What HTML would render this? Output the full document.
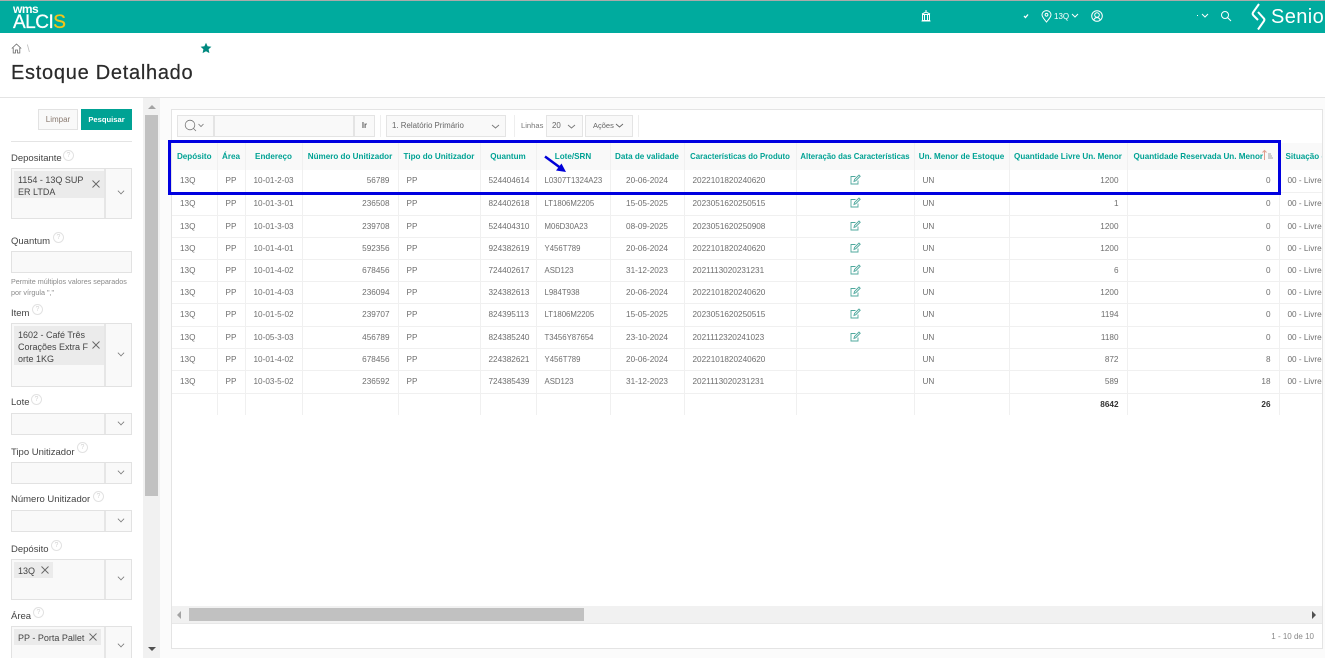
<!DOCTYPE html>
<html lang="pt-BR"><head><meta charset="utf-8"><title>Estoque Detalhado</title>
<style>
*{box-sizing:border-box}
html,body{margin:0;padding:0;width:1325px;height:658px;overflow:hidden;background:#fff;font-family:"Liberation Sans",sans-serif;color:#404040}
#w{position:relative;width:1325px;height:658px;overflow:hidden;background:#fff}
.a{position:absolute}
.lb{position:absolute;left:11px;font-size:9.5px;color:#444;white-space:nowrap;line-height:12px}
.q{position:absolute;width:11px;height:11px;border:1px solid #e2e2e2;border-radius:50%;color:#d4d4d4;font-size:7px;line-height:9px;text-align:center}
.f{position:absolute;left:11px;width:121px;background:#f9f9f9;border:1px solid #e2e2e2}
.f i{position:absolute;right:25px;top:0;bottom:0;width:2px;background:#e6e6e6}
.chev{position:absolute;width:6px;height:6px;border-right:1px solid #777;border-bottom:1px solid #777;transform:rotate(45deg) scale(.8)}
.chip{position:absolute;background:#ebebeb;font-size:9px;line-height:12px;color:#444;padding:3px 4px;white-space:pre}
.tb{position:absolute;background:#f9f9f9;border:1px solid #e4e4e4;font-size:7.9px;color:#666;line-height:20px;white-space:nowrap}
table{position:absolute;left:0;top:0;border-collapse:collapse;table-layout:fixed;width:1201px}
td,th{border-right:1px solid #f0f0f0;border-bottom:1px solid #f0f0f0;font-size:8.2px;padding:0 8px;white-space:nowrap;overflow:hidden;color:#6e6e6e;font-weight:normal}
th{background:#f9f9f9;color:#00a294;font-weight:bold;text-align:center;padding:0 2px;font-size:8.1px;border-bottom:0}
th:nth-child(9),th:nth-child(10){font-size:7.8px}
td:nth-child(7){font-size:7.8px}
.l{text-align:left}.c{text-align:center}.r{text-align:right}
.t td{color:#333;font-weight:bold}
</style></head><body><div id="w">

<!-- top bar -->
<div class="a" style="left:0;top:0;width:1325px;height:33px;background:#00ab9e;border-top:1px solid #aaa"></div>
<div class="a" style="left:13px;top:3px;color:#fff;font-size:12px;font-weight:bold;letter-spacing:-.5px;line-height:12px">wms</div>
<div class="a" style="left:13px;top:13px;color:#fff;font-size:19px;line-height:20px;letter-spacing:-.5px;-webkit-text-stroke:.3px #fff">ALCI<span style="color:#f5c518;-webkit-text-stroke:.3px #f5c518">S</span></div>
<svg class="a" style="left:920px;top:9px" width="12" height="14" viewBox="0 0 12 14" fill="none" stroke="#fff"><path d="M6 1v2M2 5l4-2 4 2M2.500 5.500h7v6h-7zM1.500 12h9M4.500 6v5M7.500 6v5"/></svg>
<svg class="a" style="left:1023px;top:13px" width="6" height="6" viewBox="0 0 6 6" fill="none" stroke="#fff" stroke-width="1.300"><path d="M1 3l1.500 1.500L5 1.500"/></svg>
<svg class="a" style="left:1041px;top:10px" width="11" height="13" viewBox="0 0 11 13" fill="none" stroke="#fff"><path d="M5.500 12C3 9 1 7 1 4.800a4.500 4.200 0 0 1 9 0C10 7 8 9 5.500 12z"/><circle cx="5.500" cy="4.800" r="1.400"/></svg>
<div class="a" style="left:1054px;top:12px;color:#fff;font-size:8px;line-height:10px">13Q</div>
<svg class="a" style="left:1071px;top:13px" width="8" height="6" viewBox="0 0 8 6" fill="none" stroke="#fff"><path d="M1 1l3 3 3-3"/></svg>
<svg class="a" style="left:1091px;top:10px" width="12" height="12" viewBox="0 0 12 12" fill="none" stroke="#fff"><circle cx="6" cy="6" r="5.300"/><circle cx="6" cy="5" r="2.300"/><path d="M2.800 10c.6-1.600 1.700-2.400 3.200-2.400s2.600.8 3.200 2.400"/></svg>
<div class="a" style="left:1197px;top:15px;width:1px;height:1px;background:#fff"></div>
<svg class="a" style="left:1201px;top:13px" width="8" height="6" viewBox="0 0 8 6" fill="none" stroke="#fff"><path d="M1 1l3 3 3-3"/></svg>
<svg class="a" style="left:1220px;top:10px" width="12" height="12" viewBox="0 0 12 12" fill="none" stroke="#fff" stroke-width="1"><circle cx="5" cy="5" r="3.500"/><path d="M7.500 7.500L11 11"/></svg>
<svg class="a" style="left:1250px;top:3px" width="17" height="28" viewBox="0 0 17 28" fill="none" stroke="#fff" stroke-width="2"><path d="M9 1L3 9.500Q2 11 3.500 12.500L8 17M8 9l5.500 6Q15 16.500 14 18L8 26.500"/></svg>
<div class="a" style="left:1271px;top:6px;color:#fff;font-size:20px;line-height:22px;letter-spacing:.4px">Senio</div>

<!-- page header -->
<svg class="a" style="left:11px;top:43px" width="11" height="11" viewBox="0 0 11 11" fill="none" stroke="#666" stroke-width=".8"><path d="M.8 5.500L5.500 1l4.700 4.500M2.200 4.800V10h2.300V7h2v3h2.300V4.800"/></svg>
<div class="a" style="left:27px;top:44px;font-size:10px;line-height:12px;color:#bbb">\</div>
<svg class="a" style="left:200px;top:42px" width="12" height="12" viewBox="0 0 12 12"><path d="M6 .8l1.600 3.500 3.800.4-2.800 2.600.8 3.800L6 9.200l-3.400 1.900.8-3.800L.6 4.700l3.800-.4z" fill="#00897f"/></svg>
<div class="a" style="left:11px;top:61px;font-size:20px;line-height:24px;letter-spacing:.72px;color:#2a2a2a;white-space:nowrap;-webkit-text-stroke:.2px #2a2a2a">Estoque Detalhado</div>
<div class="a" style="left:0;top:97px;width:1325px;height:1px;background:#e4e4e4"></div>

<!-- background right -->
<div class="a" style="left:160px;top:98px;width:1165px;height:560px;background:#fbfbfb"></div>

<!-- sidebar scrollbar -->
<div class="a" style="left:143px;top:98px;width:17px;height:560px;background:#f1f1f1"></div>
<div class="a" style="left:145px;top:115px;width:13px;height:381px;background:#c1c1c1"></div>
<div class="a" style="left:148px;top:105px;border:4px solid transparent;border-bottom:4px solid #a3a3a3;border-top:0"></div>
<div class="a" style="left:148px;top:647px;border:4px solid transparent;border-top:4px solid #505050;border-bottom:0"></div>

<!-- sidebar -->
<div class="a" style="left:38px;top:109px;width:40px;height:21px;background:#f9f9f9;border:1px solid #e2e2e2;font-size:8px;line-height:19px;text-align:center;color:#8a7a70">Limpar</div>
<div class="a" style="left:81px;top:109px;width:51px;height:21px;background:#00a294;font-size:7.600px;font-weight:bold;line-height:21px;text-align:center;color:#fff">Pesquisar</div>
<div class="a" style="left:11px;top:141px;width:121px;height:1px;background:#e4e4e4"></div>

<div class="lb" style="top:153px">Depositante</div><div class="q" style="left:63px;top:150px">?</div>
<div class="f" style="top:168px;height:51px"><i></i><b class="chev" style="right:7px;top:19px"></b></div>
<div class="chip" style="left:14px;top:171px;width:90px;height:27px">1154 - 13Q SUP
ER LTDA</div>
<svg class="a" style="left:92px;top:180px" width="8" height="8" viewBox="0 0 8 8" stroke="#666" stroke-width=".9"><path d="M.5.500l7 7M7.500.500l-7 7"/></svg>

<div class="lb" style="top:236px">Quantum</div><div class="q" style="left:53px;top:232px">?</div>
<div class="f" style="top:251px;height:22px"></div>
<div class="a" style="left:11px;top:276px;font-size:7.200px;line-height:11px;color:#8a8a8a;white-space:nowrap">Permite múltiplos valores separados<br>por vírgula ","</div>

<div class="lb" style="top:308px">Item</div><div class="q" style="left:32px;top:304px">?</div>
<div class="f" style="top:323px;height:64px"><i></i><b class="chev" style="right:7px;top:26px"></b></div>
<div class="chip" style="left:14px;top:326px;width:90px;height:39px">1602 - Café Três
Corações Extra F
orte 1KG</div>
<svg class="a" style="left:92px;top:341px" width="8" height="8" viewBox="0 0 8 8" stroke="#666" stroke-width=".9"><path d="M.5.500l7 7M7.500.500l-7 7"/></svg>

<div class="lb" style="top:397px">Lote</div><div class="q" style="left:31px;top:394px">?</div>
<div class="f" style="top:413px;height:22px"><i></i><b class="chev" style="right:7px;top:5px"></b></div>

<div class="lb" style="top:447px">Tipo Unitizador</div><div class="q" style="left:77px;top:442px">?</div>
<div class="f" style="top:462px;height:22px"><i></i><b class="chev" style="right:7px;top:5px"></b></div>

<div class="lb" style="top:494px">Número Unitizador</div><div class="q" style="left:93px;top:491px">?</div>
<div class="f" style="top:510px;height:22px"><i></i><b class="chev" style="right:7px;top:5px"></b></div>

<div class="lb" style="top:544px">Depósito</div><div class="q" style="left:51px;top:540px">?</div>
<div class="f" style="top:559px;height:41px"><i></i><b class="chev" style="right:7px;top:14px"></b></div>
<div class="chip" style="left:14px;top:562px;width:39px;height:16px">13Q</div>
<svg class="a" style="left:41px;top:566px" width="8" height="8" viewBox="0 0 8 8" stroke="#666" stroke-width=".9"><path d="M.5.500l7 7M7.500.500l-7 7"/></svg>

<div class="lb" style="top:611px">Área</div><div class="q" style="left:33px;top:607px">?</div>
<div class="f" style="top:626px;height:40px"><i></i><b class="chev" style="right:7px;top:14px"></b></div>
<div class="chip" style="left:14px;top:629px;width:87px;height:16px">PP - Porta Pallet</div>
<svg class="a" style="left:89px;top:633px" width="8" height="8" viewBox="0 0 8 8" stroke="#666" stroke-width=".9"><path d="M.5.500l7 7M7.500.500l-7 7"/></svg>

<!-- report panel -->
<div class="a" style="left:171px;top:109px;width:1152px;height:540px;background:#fff;border:1px solid #e4e4e4"></div>

<!-- toolbar -->
<div class="tb" style="left:177px;top:115px;width:37px;height:22px"></div>
<svg class="a" style="left:184px;top:119px" width="24" height="14" viewBox="0 0 24 14" fill="none" stroke="#777" stroke-width=".8"><circle cx="6" cy="6" r="4.800"/><path d="M9.500 9.500L12 12M14.500 5l2.500 2.500L19.500 5"/></svg>
<div class="tb" style="left:214px;top:115px;width:140px;height:22px"></div>
<div class="tb" style="left:354px;top:115px;width:21px;height:22px;text-align:center;font-weight:bold">Ir</div>
<div class="a" style="left:380px;top:115px;width:1px;height:22px;background:#eee"></div>
<div class="tb" style="left:386px;top:115px;width:120px;height:22px;padding-left:5px">1. Relatório Primário</div>
<svg class="a" style="left:491px;top:124px" width="9" height="6" viewBox="0 0 9 6" fill="none" stroke="#777" stroke-width=".9"><path d="M1 1l3.500 3L8 1"/></svg>
<div class="a" style="left:514px;top:115px;width:1px;height:22px;background:#eee"></div>
<div class="a" style="left:521px;top:121px;font-size:7.600px;line-height:10px;color:#777">Linhas</div>
<div class="tb" style="left:546px;top:115px;width:37px;height:22px;padding-left:5px">20</div>
<svg class="a" style="left:567px;top:124px" width="9" height="6" viewBox="0 0 9 6" fill="none" stroke="#777" stroke-width=".9"><path d="M1 1l3.500 3L8 1"/></svg>
<div class="tb" style="left:585px;top:115px;width:48px;height:22px;padding-left:7px;font-size:7.500px">Ações</div>
<svg class="a" style="left:615px;top:123px" width="9" height="6" viewBox="0 0 9 6" fill="none" stroke="#666" stroke-width=".9"><path d="M1 1l3.500 3L8 1"/></svg>
<div class="a" style="left:638px;top:115px;width:1px;height:22px;background:#eee"></div>

<!-- table -->
<div class="a" style="left:172px;top:143px;width:1150px;height:273px;overflow:hidden">
<table>
<colgroup><col style="width:45px"><col style="width:28px"><col style="width:57px"><col style="width:96px"><col style="width:82px"><col style="width:56px"><col style="width:74px"><col style="width:74px"><col style="width:112px"><col style="width:118px"><col style="width:95px"><col style="width:118px"><col style="width:152px"><col style="width:94px"></colgroup>
<tr style="height:27px"><th>Depósito</th><th>Área</th><th>Endereço</th><th>Número do Unitizador</th><th>Tipo do Unitizador</th><th>Quantum</th><th>Lote/SRN</th><th>Data de validade</th><th>Características do Produto</th><th>Alteração das Características</th><th>Un. Menor de Estoque</th><th>Quantidade Livre Un. Menor</th><th style="text-align:left;padding-left:6px">Quantidade Reservada Un. Menor</th><th style="text-align:left;padding-left:6px">Situação do Quantum</th></tr>
<tr style="height:22px"><td>13Q</td><td class="c">PP</td><td class="c">10-01-2-03</td><td class="r">56789</td><td>PP</td><td class="c">524404614</td><td>L0307T1324A23</td><td class="c">20-06-2024</td><td>2022101820240620</td><td class="c"><svg width="11" height="11" viewBox="0 0 11 11" fill="none" stroke="#4fa89d" stroke-width=".9"><path d="M8 6.500V10H1V2.500h4.500M4 7.500l.5-2L9 1l1.200 1.200-4.400 4.500z"/></svg></td><td>UN</td><td class="r">1200</td><td class="r">0</td><td>00 - Livre</td></tr>
<tr style="height:23px"><td>13Q</td><td class="c">PP</td><td class="c">10-01-3-01</td><td class="r">236508</td><td>PP</td><td class="c">824402618</td><td>LT1806M2205</td><td class="c">15-05-2025</td><td>2023051620250515</td><td class="c"><svg width="11" height="11" viewBox="0 0 11 11" fill="none" stroke="#4fa89d" stroke-width=".9"><path d="M8 6.500V10H1V2.500h4.500M4 7.500l.5-2L9 1l1.200 1.200-4.400 4.500z"/></svg></td><td>UN</td><td class="r">1</td><td class="r">0</td><td>00 - Livre</td></tr>
<tr style="height:22px"><td>13Q</td><td class="c">PP</td><td class="c">10-01-3-03</td><td class="r">239708</td><td>PP</td><td class="c">524404310</td><td>M06D30A23</td><td class="c">08-09-2025</td><td>2023051620250908</td><td class="c"><svg width="11" height="11" viewBox="0 0 11 11" fill="none" stroke="#4fa89d" stroke-width=".9"><path d="M8 6.500V10H1V2.500h4.500M4 7.500l.5-2L9 1l1.200 1.200-4.400 4.500z"/></svg></td><td>UN</td><td class="r">1200</td><td class="r">0</td><td>00 - Livre</td></tr>
<tr style="height:22px"><td>13Q</td><td class="c">PP</td><td class="c">10-01-4-01</td><td class="r">592356</td><td>PP</td><td class="c">924382619</td><td>Y456T789</td><td class="c">20-06-2024</td><td>2022101820240620</td><td class="c"><svg width="11" height="11" viewBox="0 0 11 11" fill="none" stroke="#4fa89d" stroke-width=".9"><path d="M8 6.500V10H1V2.500h4.500M4 7.500l.5-2L9 1l1.200 1.200-4.400 4.500z"/></svg></td><td>UN</td><td class="r">1200</td><td class="r">0</td><td>00 - Livre</td></tr>
<tr style="height:22px"><td>13Q</td><td class="c">PP</td><td class="c">10-01-4-02</td><td class="r">678456</td><td>PP</td><td class="c">724402617</td><td>ASD123</td><td class="c">31-12-2023</td><td>2021113020231231</td><td class="c"><svg width="11" height="11" viewBox="0 0 11 11" fill="none" stroke="#4fa89d" stroke-width=".9"><path d="M8 6.500V10H1V2.500h4.500M4 7.500l.5-2L9 1l1.200 1.200-4.400 4.500z"/></svg></td><td>UN</td><td class="r">6</td><td class="r">0</td><td>00 - Livre</td></tr>
<tr style="height:22px"><td>13Q</td><td class="c">PP</td><td class="c">10-01-4-03</td><td class="r">236094</td><td>PP</td><td class="c">324382613</td><td>L984T938</td><td class="c">20-06-2024</td><td>2022101820240620</td><td class="c"><svg width="11" height="11" viewBox="0 0 11 11" fill="none" stroke="#4fa89d" stroke-width=".9"><path d="M8 6.500V10H1V2.500h4.500M4 7.500l.5-2L9 1l1.200 1.200-4.400 4.500z"/></svg></td><td>UN</td><td class="r">1200</td><td class="r">0</td><td>00 - Livre</td></tr>
<tr style="height:23px"><td>13Q</td><td class="c">PP</td><td class="c">10-01-5-02</td><td class="r">239707</td><td>PP</td><td class="c">824395113</td><td>LT1806M2205</td><td class="c">15-05-2025</td><td>2023051620250515</td><td class="c"><svg width="11" height="11" viewBox="0 0 11 11" fill="none" stroke="#4fa89d" stroke-width=".9"><path d="M8 6.500V10H1V2.500h4.500M4 7.500l.5-2L9 1l1.200 1.200-4.400 4.500z"/></svg></td><td>UN</td><td class="r">1194</td><td class="r">0</td><td>00 - Livre</td></tr>
<tr style="height:22px"><td>13Q</td><td class="c">PP</td><td class="c">10-05-3-03</td><td class="r">456789</td><td>PP</td><td class="c">824385240</td><td>T3456Y87654</td><td class="c">23-10-2024</td><td>2021112320241023</td><td class="c"><svg width="11" height="11" viewBox="0 0 11 11" fill="none" stroke="#4fa89d" stroke-width=".9"><path d="M8 6.500V10H1V2.500h4.500M4 7.500l.5-2L9 1l1.200 1.200-4.400 4.500z"/></svg></td><td>UN</td><td class="r">1180</td><td class="r">0</td><td>00 - Livre</td></tr>
<tr style="height:22px"><td>13Q</td><td class="c">PP</td><td class="c">10-01-4-02</td><td class="r">678456</td><td>PP</td><td class="c">224382621</td><td>Y456T789</td><td class="c">20-06-2024</td><td>2022101820240620</td><td></td><td>UN</td><td class="r">872</td><td class="r">8</td><td>00 - Livre</td></tr>
<tr style="height:23px"><td>13Q</td><td class="c">PP</td><td class="c">10-03-5-02</td><td class="r">236592</td><td>PP</td><td class="c">724385439</td><td>ASD123</td><td class="c">31-12-2023</td><td>2021113020231231</td><td></td><td>UN</td><td class="r">589</td><td class="r">18</td><td>00 - Livre</td></tr>
<tr class="t" style="height:22px"><td style="border-bottom:0"></td><td style="border-bottom:0"></td><td style="border-bottom:0"></td><td style="border-bottom:0"></td><td style="border-bottom:0"></td><td style="border-bottom:0"></td><td style="border-bottom:0"></td><td style="border-bottom:0"></td><td style="border-bottom:0"></td><td style="border-bottom:0"></td><td style="border-bottom:0"></td><td class="r" style="border-bottom:0">8642</td><td class="r" style="border-bottom:0">26</td><td style="border-bottom:0"></td></tr>
</table>
</div>

<!-- sort icon -->
<svg class="a" style="left:1261px;top:149px" width="14" height="12" viewBox="0 0 14 12" fill="none"><path d="M3.500 11V1.500M1.500 3.500l2-2 2 2" stroke="#e0a090"/><path d="M7 5h3M7 7h4M7 9h5" stroke="#888" stroke-width=".7"/></svg>

<!-- highlight -->
<div class="a" style="left:168px;top:140px;width:1113px;height:55px;border:3px solid #0000e0"></div>
<svg class="a" style="left:543px;top:153px" width="26" height="22" viewBox="0 0 26 22"><path d="M2 3.500l15 11" stroke="#0000d8" stroke-width="2.500"/><path d="M23 19l-10-1.500 5.500-7z" fill="#0000d8"/></svg>

<!-- horizontal scrollbar -->
<div class="a" style="left:172px;top:606px;width:1150px;height:17px;background:#f1f1f1"></div>
<div class="a" style="left:189px;top:608px;width:395px;height:13px;background:#c1c1c1"></div>
<div class="a" style="left:177px;top:611px;border:4px solid transparent;border-right:4px solid #a3a3a3;border-left:0"></div>
<div class="a" style="left:1312px;top:611px;border:4px solid transparent;border-left:4px solid #505050;border-right:0"></div>
<div class="a" style="left:172px;top:623px;width:1150px;height:1px;background:#e8e8e8"></div>
<div class="a" style="left:1214px;top:632px;width:100px;text-align:right;font-size:8px;line-height:10px;color:#888">1 - 10 de 10</div>
</div></body></html>
